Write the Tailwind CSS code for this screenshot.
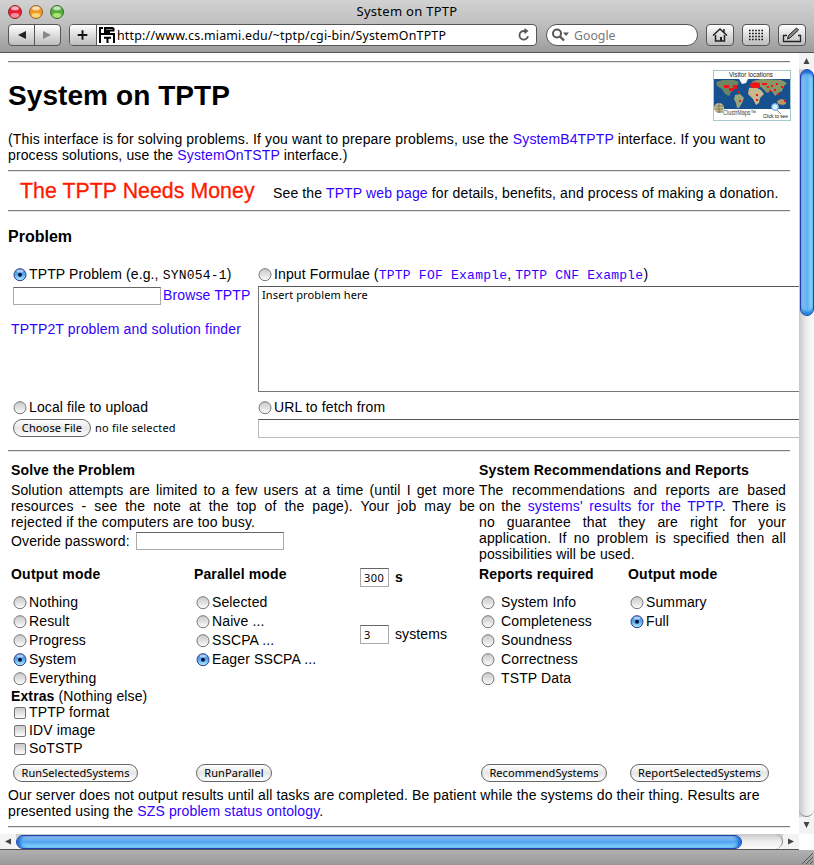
<!DOCTYPE html>
<html lang="en">
<head>
<meta charset="utf-8">
<title>System on TPTP</title>
<script src="https://cdn.jsdelivr.net/npm/@tailwindcss/browser@4"></script>
</head>
<body class="w-[814px] h-[865px] overflow-hidden bg-white text-black font-['Liberation_Sans',Arial,sans-serif] text-[14px] leading-4 tracking-[0.12px] flex flex-col">
<svg class="absolute w-0 h-0">
  <defs>
    <linearGradient id="gr" x1="0" y1="0" x2="0" y2="1"><stop offset="0" stop-color="#c9c9c9"/><stop offset=".45" stop-color="#dedede"/><stop offset="1" stop-color="#fff"/></linearGradient>
    <linearGradient id="bl" x1="0" y1="0" x2="0" y2="1"><stop offset="0" stop-color="#3f84dc"/><stop offset=".5" stop-color="#5aa9ee"/><stop offset="1" stop-color="#b4f0ff"/></linearGradient>
    <symbol id="off" viewBox="0 0 14 14"><circle cx="7" cy="6.7" r="6" fill="url(#gr)" stroke="#777"/></symbol>
    <symbol id="on" viewBox="0 0 14 14"><circle cx="7" cy="6.7" r="6" fill="url(#bl)" stroke="#2a3f8c"/><ellipse cx="7" cy="3" rx="3.4" ry="1.6" fill="#fff" opacity=".55"/><circle cx="7" cy="6.7" r="2" fill="#06123a"/></symbol>
    <symbol id="chk" viewBox="0 0 14 14"><rect x="1.5" y="1.5" width="11" height="11" rx="1.5" fill="url(#gr)" stroke="#777"/></symbol>
  </defs>
</svg>

<header class="h-[53px] shrink-0 border-b border-[#555] bg-linear-to-b from-[#d2d2d2] via-[#bdbdbd] to-[#9c9c9c] font-['Noto_Sans',sans-serif] flex flex-col">
  <div class="h-6 grid grid-cols-[1fr_auto_1fr] items-center">
    <svg class="w-[70px] h-[22px]" viewBox="0 0 70 22">
      <circle cx="15" cy="11" r="6.5" fill="#e8213a" stroke="#8c2b35"/><ellipse cx="15" cy="7.2" rx="3.8" ry="2" fill="#fff" opacity=".65"/><ellipse cx="15" cy="14.3" rx="4.2" ry="2.4" fill="#ffb3b3" opacity=".75"/>
      <circle cx="36" cy="11" r="6.5" fill="#ee9a2b" stroke="#96602c"/><ellipse cx="36" cy="7.2" rx="3.8" ry="2" fill="#fff" opacity=".65"/><ellipse cx="36" cy="14.3" rx="4.2" ry="2.4" fill="#ffe98e" opacity=".75"/>
      <circle cx="57" cy="11" r="6.5" fill="#58ad3a" stroke="#3c6e33"/><ellipse cx="57" cy="7.2" rx="3.8" ry="2" fill="#fff" opacity=".65"/><ellipse cx="57" cy="14.3" rx="4.2" ry="2.4" fill="#c5f58b" opacity=".75"/>
    </svg>
    <h2 class="text-[13px] leading-[22px] tracking-[0.28px] -mt-[2px]">System on TPTP</h2>
    <span></span>
  </div>
  <div class="flex pl-2 h-[22px]">
    <div class="w-[53px] h-[22px] rounded-[4px] border border-[#555] bg-linear-to-b from-white to-[#bdbdbd] flex">
      <svg class="w-[51px] h-5" viewBox="0 0 51 20"><path d="M25.5 0V20" stroke="#555"/><path d="M17 6v8L9 10z" fill="#222"/><path d="M34 6v8l8-4z" fill="#888"/></svg>
    </div>
    <div class="ml-2 w-[468px] h-[22px] rounded-[4px] border border-[#555] bg-white flex overflow-hidden">
      <svg class="w-[27px] h-5 shrink-0 bg-linear-to-b from-white to-[#bdbdbd] border-r border-[#555]" viewBox="0 0 27 20"><path d="M13 5v10M8 10h10" stroke="#111" stroke-width="2"/></svg>
      <svg class="w-4 h-4 ml-[2px] mt-[2px] shrink-0" viewBox="0 0 16 16"><path d="M1 0V16M0 7h16M15 6v10M14.500 1H6v2.500h8.500V1M5 5.500h6M0 1h4M5 10.800h7M8.500 10v6" stroke="#000" stroke-width="2" fill="none"/></svg>
      <span class="ml-[2px] text-[12.4px] leading-[21px] grow whitespace-nowrap tracking-[0.21px]">http://www.cs.miami.edu/~tptp/cgi-bin/SystemOnTPTP</span>
      <svg class="w-[14px] h-[14px] mt-[3px] mr-[5px] shrink-0" viewBox="0 0 14 14"><path d="M11 8.2A4.3 4.3 0 1 1 7 3h2.5" fill="none" stroke="#555" stroke-width="1.8"/><path d="M7.5 0L11.5 3 7.5 6.2z" fill="#555"/></svg>
    </div>
    <div class="ml-[9px] w-[152px] h-[22px] rounded-full border border-[#555] bg-white flex items-center">
      <svg class="w-[19px] h-4 ml-[4px] shrink-0" viewBox="0 0 19 16"><circle cx="6" cy="6.5" r="4" fill="none" stroke="#555" stroke-width="2"/><path d="M9 9.5l4 4" stroke="#555" stroke-width="2.4"/><path d="M12 5.5h6l-3 3.5z" fill="#555"/></svg>
      <span class="ml-[4px] text-[12.3px] leading-5 tracking-normal text-[#777] mt-px">Google</span>
    </div>
    <div class="ml-2 w-7 h-[22px] rounded-[4px] border border-[#555] bg-linear-to-b from-white to-[#bdbdbd]">
      <svg class="w-[26px] h-5" viewBox="0 0 26 20"><path d="M6 10.5L13 4l7 6.500M8.500 10v6h9v-6M17 4v3.500" fill="none" stroke="#222" stroke-width="1.500"/><path d="M13 12h2v4h-2z" fill="#222"/></svg>
    </div>
    <div class="ml-2 w-7 h-[22px] rounded-[4px] border border-[#555] bg-linear-to-b from-white to-[#bdbdbd]">
      <svg class="w-[26px] h-5" viewBox="0 0 26 20"><path d="M6 5.500h14M6 8.500h14M6 11.500h14M6 14.500h14" stroke="#111" stroke-width="1.600" stroke-dasharray="1.600 1.500"/></svg>
    </div>
    <div class="ml-2 w-7 h-[22px] rounded-[4px] border border-[#555] bg-linear-to-b from-white to-[#bdbdbd]">
      <svg class="w-[26px] h-5" viewBox="0 0 26 20"><path d="M8 10.500H4.500v6h17v-6H19" fill="none" stroke="#222" stroke-width="1.300"/><path d="M8.500 14l1-3.500 8-7.500 2 2-8 7.500z" fill="#888" stroke="#222"/></svg>
    </div>
  </div>
</header>

<div class="flex h-[781px] shrink-0">
  <main class="w-[799px] h-[781px] overflow-hidden pl-2 pt-2">
    <div class="w-[782px] h-[2px] border-t border-[#808080] border-b border-b-[#e4e4e4]"></div>
    <div class="h-[68px] w-[783px] flex justify-between">
      <h1 class="font-bold text-[28px] leading-8 tracking-[0.08px] mt-[17px]">System on TPTP</h1>
      <svg class="w-[78px] h-[51px] mt-[7px] tracking-normal" viewBox="0 0 78 51" font-family="Liberation Sans, sans-serif">
        <rect width="78" height="51" fill="#a9c8cc"/><rect x="1" y="1" width="76" height="49" fill="#fff"/>
        <rect x="1" y="9" width="76" height="30" fill="#17508f"/>
        <path d="M3 12l7-2 11 0 5 2-2 4-3 3-3 3-2 4-4-2-3-5-5-3z" fill="#6d8465"/>
        <path d="M26 9h9l-2 4-4 1z" fill="#fff"/>
        <path d="M22 25l5-1 4 4-2 5-3 5-2 0-1-5-2-4z" fill="#9aa57b"/>
        <path d="M36 18l6-1 6 3 3 4-4 4-1 5-3 2-3-6-5-5z" fill="#c8b88d"/>
        <path d="M37 15l3-4 8-2 20 1 6 3-3 3-2 5-4 2-3 3-3-5-5 2-6-6-6-1z" fill="#899668"/>
        <path d="M64 31l4-2 5 1 0 4-3 1-5-1z" fill="#b99866"/>
        <path d="M11 15h5v3h4v-3h4v4h-3v2h-5v-3h-5zM37 14l4-2 6 1v5h-9z" fill="#f01414"/>
        <path d="M49 14h5M25 22h2M26 31h2M43 30h2M54 17h2M58 16h2M61 20h2M56 21h2M63 14h2M68 17h2M71 31h2M64 24h2M43 25h2" stroke="#f01414" stroke-width="2"/>
        <circle cx="6" cy="38" r="5" fill="#c5bb8b"/><path d="M2 39h8M3 36h7M4 42h6M6 33v10" stroke="#6d7058" stroke-width=".8"/>
        <circle cx="62" cy="37" r="3.400" fill="#d5efff" stroke="#6aa6d4"/><path d="M64 40l4 4" stroke="#888"/>
        <text x="16" y="6.800" font-size="6.500" textLength="44" lengthAdjust="spacingAndGlyphs" fill="#222">Visitor locations</text>
        <text x="10" y="45" font-size="6.500" textLength="33" lengthAdjust="spacingAndGlyphs" fill="#444">ClustrMaps™</text>
        <text x="50" y="48" font-size="5.500" textLength="25" lengthAdjust="spacingAndGlyphs" fill="#111">Click to see</text>
      </svg>
    </div>
    <p class="whitespace-nowrap tracking-[0.13px]">(This interface is for solving problems. If you want to prepare problems, use the <a class="text-[#3300ff]">SystemB4TPTP</a> interface. If you want to<br>process solutions, use the <a class="text-[#3300ff]">SystemOnTSTP</a> interface.)</p>
    <div class="mt-[7px] w-[782px] h-[2px] border-t border-[#808080] border-b border-b-[#e4e4e4]"></div>
    <div class="h-[38px] flex items-baseline pl-3 pt-[7px] whitespace-nowrap">
      <span class="text-[21.3px] leading-6 tracking-[0.05px] [-webkit-text-stroke:0.3px_#ff1a00] text-[#ff1a00] w-[253px]">The TPTP Needs Money</span>
      <span class="tracking-[0.13px]">See the <a class="text-[#3300ff]">TPTP web page</a> for details, benefits, and process of making a donation.</span>
    </div>
    <div class="w-[782px] h-[2px] border-t border-[#808080] border-b border-b-[#e4e4e4]"></div>
    <h3 class="mt-[15px] h-5 font-bold text-[16px] leading-5 tracking-normal">Problem</h3>

    <section class="mt-[19px] h-[184px] grid grid-cols-[250px_541px] whitespace-nowrap">
      <div class="pl-[5px]">
        <label class="flex h-4 gap-[2px]"><svg class="size-[14px] mt-[2px]"><use href="#on"/></svg><span>TPTP Problem (e.g., <code class="font-['Liberation_Mono',monospace] text-[13px] leading-none tracking-[0.2px]">SYN054-1</code>)</span></label>
        <div class="flex mt-[4px] h-[19px]"><div class="w-[148px] h-[18px] mt-px border border-[#aaa] border-t-[#666] bg-white"></div><a class="ml-[2px] mt-[1px] text-[#3300ff]">Browse TPTP</a></div>
        <a class="block -ml-[2px] mt-[16px] text-[#3300ff] tracking-[0.16px]">TPTP2T problem and solution finder</a>
        <label class="flex h-4 gap-[2px] mt-[62px]"><svg class="size-[14px] mt-[2px]"><use href="#off"/></svg>Local file to upload</label>
        <div class="flex mt-[4px] font-['Noto_Sans',sans-serif] text-[11px]"><span class="w-[78px] h-[18px] leading-4 text-center rounded-full border border-[#666] bg-linear-to-b from-white via-[#e6e6e6] to-white">Choose File</span><span class="ml-[4px] leading-[18px] tracking-[0.2px]">no file selected</span></div>
      </div>
      <div>
        <label class="flex h-4 gap-[2px]"><svg class="size-[14px] mt-[2px]"><use href="#off"/></svg><span>Input Formulae (<a class="font-['Liberation_Mono',monospace] text-[13px] leading-none tracking-[0.24px] text-[#3300ff]">TPTP FOF Example</a>, <a class="font-['Liberation_Mono',monospace] text-[13px] leading-none tracking-[0.2px] text-[#3300ff]">TPTP CNF Example</a>)</span></label>
        <div class="mt-[4px] h-[106px] border-y border-l border-[#777] border-t-[#555] pl-[3px] font-['Noto_Sans',sans-serif] text-[11px] leading-[15px]">Insert problem here</div>
        <label class="flex h-4 gap-[2px] mt-[7px]"><svg class="size-[14px] mt-[2px]"><use href="#off"/></svg>URL to fetch from</label>
        <div class="mt-[4px] h-[19px] border-t border-b border-l border-[#bbb] border-t-[#555]"></div>
      </div>
    </section>
    <div class="w-[782px] h-[2px] border-t border-[#808080] border-b border-b-[#e4e4e4]"></div>

    <section class="pl-[3px] mt-[10px] grid grid-cols-[464px_307px] gap-x-1 whitespace-nowrap h-[104px]">
      <div>
        <h4 class="font-bold h-5">Solve the Problem</h4>
        <p class="[text-align-last:justify]">Solution attempts are limited to a few users at a time (until I get more</p>
        <p class="[text-align-last:justify]">resources - see the note at the top of the page). Your job may be</p>
        <p class="tracking-[0.18px]">rejected if the computers are too busy.</p>
        <div class="flex h-[19px]"><span class="w-[125px] mt-[3px]">Overide password:</span><div class="w-[148px] h-[18px] mt-[2px] border border-[#aaa] border-t-[#666]"></div></div>
      </div>
      <div>
        <h4 class="font-bold h-5 tracking-[0.16px]">System Recommendations and Reports</h4>
        <p class="[text-align-last:justify]">The recommendations and reports are based</p>
        <p class="[text-align-last:justify]">on the <a class="text-[#3300ff]">systems' results for the TPTP</a>. There is</p>
        <p class="[text-align-last:justify]">no guarantee that they are right for your</p>
        <p class="[text-align-last:justify]">application. If no problem is specified then all</p>
        <p>possibilities will be used.</p>
      </div>
    </section>

    <section class="pl-[3px] h-[198px] grid grid-cols-[183px_166px_119px_149px_160px] whitespace-nowrap">
      <div>
        <h4 class="font-bold h-[28px] tracking-[0.22px]">Output mode</h4>
        <label class="flex h-[19px] gap-[2px] pl-[2px]"><svg class="size-[14px] mt-[2px]"><use href="#off"/></svg>Nothing</label>
        <label class="flex h-[19px] gap-[2px] pl-[2px]"><svg class="size-[14px] mt-[2px]"><use href="#off"/></svg>Result</label>
        <label class="flex h-[19px] gap-[2px] pl-[2px]"><svg class="size-[14px] mt-[2px]"><use href="#off"/></svg>Progress</label>
        <label class="flex h-[19px] gap-[2px] pl-[2px]"><svg class="size-[14px] mt-[2px]"><use href="#on"/></svg>System</label>
        <label class="flex h-[18px] gap-[2px] pl-[2px]"><svg class="size-[14px] mt-[2px]"><use href="#off"/></svg>Everything</label>
        <p class="h-4"><b>Extras</b> (Nothing else)</p>
        <label class="flex h-[18px] gap-[2px] pl-[2px]"><svg class="size-[14px] mt-[2px]"><use href="#chk"/></svg>TPTP format</label>
        <label class="flex h-[18px] gap-[2px] pl-[2px]"><svg class="size-[14px] mt-[2px]"><use href="#chk"/></svg>IDV image</label>
        <label class="flex h-[18px] gap-[2px] pl-[2px]"><svg class="size-[14px] mt-[2px]"><use href="#chk"/></svg>SoTSTP</label>
      </div>
      <div>
        <h4 class="font-bold h-[28px]">Parallel mode</h4>
        <label class="flex h-[19px] gap-[2px] pl-[2px]"><svg class="size-[14px] mt-[2px]"><use href="#off"/></svg>Selected</label>
        <label class="flex h-[19px] gap-[2px] pl-[2px]"><svg class="size-[14px] mt-[2px]"><use href="#off"/></svg>Naive ...</label>
        <label class="flex h-[19px] gap-[2px] pl-[2px]"><svg class="size-[14px] mt-[2px]"><use href="#off"/></svg>SSCPA ...</label>
        <label class="flex h-[19px] gap-[2px] pl-[2px]"><svg class="size-[14px] mt-[2px]"><use href="#on"/></svg>Eager SSCPA ...</label>
      </div>
      <div class="pt-[2px]">
        <div class="flex h-[57px]"><span class="w-[29px] h-[19px] border border-[#aaa] border-t-[#666] pl-[3px] font-['Noto_Sans',sans-serif] text-[11px] leading-[17px] tracking-[0.4px]">300</span><b class="ml-[6px] mt-px">s</b></div>
        <div class="flex"><span class="w-[29px] h-[19px] border border-[#aaa] border-t-[#666] pl-[3px] font-['Noto_Sans',sans-serif] text-[11px] leading-[17px]">3</span><span class="ml-[6px] mt-px">systems</span></div>
      </div>
      <div>
        <h4 class="font-bold h-[28px]">Reports required</h4>
        <label class="flex h-[19px] gap-[6px] pl-[2px]"><svg class="size-[14px] mt-[2px]"><use href="#off"/></svg>System Info</label>
        <label class="flex h-[19px] gap-[6px] pl-[2px]"><svg class="size-[14px] mt-[2px]"><use href="#off"/></svg>Completeness</label>
        <label class="flex h-[19px] gap-[6px] pl-[2px]"><svg class="size-[14px] mt-[2px]"><use href="#off"/></svg>Soundness</label>
        <label class="flex h-[19px] gap-[6px] pl-[2px]"><svg class="size-[14px] mt-[2px]"><use href="#off"/></svg>Correctness</label>
        <label class="flex h-[19px] gap-[6px] pl-[2px]"><svg class="size-[14px] mt-[2px]"><use href="#off"/></svg>TSTP Data</label>
      </div>
      <div>
        <h4 class="font-bold h-[28px] tracking-[0.22px]">Output mode</h4>
        <label class="flex h-[19px] gap-[2px] pl-[2px]"><svg class="size-[14px] mt-[2px]"><use href="#off"/></svg>Summary</label>
        <label class="flex h-[19px] gap-[2px] pl-[2px]"><svg class="size-[14px] mt-[2px]"><use href="#on"/></svg>Full</label>
      </div>
    </section>
    <div class="pl-[5px] h-[23px] flex font-['Noto_Sans',sans-serif] text-[11px] tracking-[0.08px] leading-4 text-center">
      <span class="w-[125px] h-[18px] rounded-full border border-[#666] bg-linear-to-b from-white via-[#e6e6e6] to-white">RunSelectedSystems</span>
      <span class="ml-[58px] w-[76px] h-[18px] rounded-full border border-[#666] bg-linear-to-b from-white via-[#e6e6e6] to-white">RunParallel</span>
      <span class="ml-[209px] w-[126px] h-[18px] rounded-full border border-[#666] bg-linear-to-b from-white via-[#e6e6e6] to-white">RecommendSystems</span>
      <span class="ml-[23px] w-[139px] h-[18px] rounded-full border border-[#666] bg-linear-to-b from-white via-[#e6e6e6] to-white">ReportSelectedSystems</span>
    </div>
    <p class="whitespace-nowrap">Our server does not output results until all tasks are completed. Be patient while the systems do their thing. Results are<br>presented using the <a class="text-[#3300ff]">SZS problem status ontology</a>.</p>
    <div class="mt-[7px] w-[782px] h-[2px] border-t border-[#808080] border-b border-b-[#e4e4e4]"></div>
  </main>
  <aside class="w-[15px] h-[781px] bg-linear-to-r from-[#c8c8c8] via-[#eee] to-[#fafafa] flex flex-col">
    <svg class="w-[15px] h-4 bg-[#f3f3f3]" viewBox="0 0 15 16"><path d="M7.500 5l3 6h-6z" fill="#444"/></svg>
    <div class="w-[14px] h-[247px] ml-px rounded-full border border-[#1d3fb0] bg-linear-to-r from-[#93bfe8] via-[#5fb0f5] to-[#8fe0fb] shadow-[inset_0_4px_3px_-1px_#1c5fd0,inset_0_-4px_3px_-1px_#1c7fe0]"></div>
    <div class="grow rounded-b-full border-b border-[#888]"></div>
    <svg class="w-[15px] h-[17px] bg-[#f3f3f3]" viewBox="0 0 15 17"><path d="M7.500 11l3-6h-6z" fill="#444"/></svg>
  </aside>
</div>
<div class="flex h-4 w-[799px] shrink-0 border-b border-[#555] bg-linear-to-b from-[#c8c8c8] via-[#eee] to-[#fafafa]">
  <svg class="w-4 h-[15px] bg-[#f3f3f3]" viewBox="0 0 16 15"><path d="M5 7.500l6-3v6z" fill="#444"/></svg>
  <div class="w-[726px] h-[14px] mt-px rounded-full border border-[#1d3fb0] bg-linear-to-b from-[#93bfe8] via-[#4fa4f3] to-[#8fe0fb] shadow-[inset_4px_0_3px_-1px_#1c6fd8,inset_-4px_0_3px_-1px_#1c6fd8]"></div>
  <div class="w-[41px] h-[15px] rounded-r-full border-r border-[#888]"></div>
  <svg class="w-4 h-[15px] bg-[#f3f3f3]" viewBox="0 0 16 15"><path d="M11 7.500l-6-3v6z" fill="#444"/></svg>
</div>
<footer class="h-[15px] bg-linear-to-b from-[#b0b0b0] to-[#999] flex justify-end"><svg class="size-[15px]" viewBox="0 0 15 15"><path d="M3 14L14 3M7 14l7-7M11 14l3-3" stroke="#555"/></svg></footer>
</body>
</html>
